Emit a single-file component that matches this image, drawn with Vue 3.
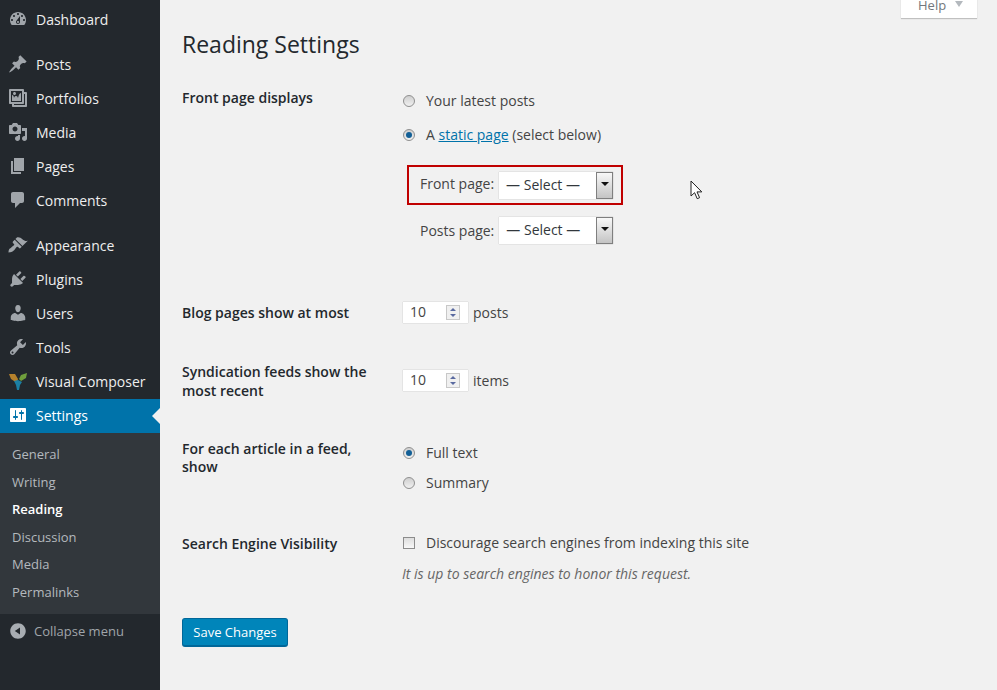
<script setup>
const icons = {
  dashboard: 'M3.76 16h12.48c1.1-1.37 1.76-3.11 1.76-5 0-4.42-3.58-8-8-8s-8 3.58-8 8c0 1.89.66 3.63 1.76 5zM10 4c.55 0 1 .45 1 1s-.45 1-1 1-1-.45-1-1 .45-1 1-1zM6 6c.55 0 1 .45 1 1s-.45 1-1 1-1-.45-1-1 .45-1 1-1zm8 0c.55 0 1 .45 1 1s-.45 1-1 1-1-.45-1-1 .45-1 1-1zm-5.37 5.55L12 7v6c0 1.1-.9 2-2 2s-2-.9-2-2c0-.57.24-1.08.63-1.45zM4 10c.55 0 1 .45 1 1s-.45 1-1 1-1-.45-1-1 .45-1 1-1zm12 0c.55 0 1 .45 1 1s-.45 1-1 1-1-.45-1-1 .45-1 1-1zm-5 3c0-.55-.45-1-1-1s-1 .45-1 1 .45 1 1 1 1-.45 1-1z',
  pin: 'M10.44 3.02l1.82-1.82 6.36 6.35-1.83 1.82c-1.05-.68-2.48-.57-3.41.36l-.75.75c-.92.93-1.04 2.35-.35 3.41l-1.83 1.82-2.41-2.41-2.8 2.79c-.42.42-3.38 2.71-3.8 2.29s1.86-3.39 2.28-3.81l2.79-2.79L4.1 9.36l1.83-1.82c1.05.69 2.48.57 3.4-.36l.75-.75c.93-.92 1.05-2.35.36-3.41z',
  gallery: 'M16 4h1.96c.57 0 1.04.47 1.04 1.04v12.92c0 .57-.47 1.04-1.04 1.04H5.04C4.47 19 4 18.53 4 17.96V16H2.04C1.47 16 1 15.53 1 14.96V2.04C1 1.47 1.47 1 2.04 1h12.92c.57 0 1.04.47 1.04 1.04V4zM3 14h11V3H3v11zm5-8.5C8 4.67 7.33 4 6.5 4S5 4.67 5 5.5 5.67 7 6.5 7 8 6.33 8 5.5zm2 4.5s1-5 3-5v8H4V7c2 0 2 3 2 3s.33-2 2-2 2 2 2 2zm7 7V6h-1v8.96c0 .57-.47 1.04-1.04 1.04H6v1h11z',
  media: 'M13 11V4c0-.55-.45-1-1-1h-1.67L9 1H5L3.67 3H2c-.55 0-1 .45-1 1v7c0 .55.45 1 1 1h10c.55 0 1-.45 1-1zM7 4.5c1.38 0 2.5 1.12 2.5 2.5S8.38 9.5 7 9.5 4.5 8.38 4.5 7 5.62 4.5 7 4.5zM14 6h5v10.5c0 1.38-1.12 2.5-2.5 2.5S14 17.88 14 16.5s1.12-2.5 2.5-2.5c.17 0 .34.02.5.05V9h-3V6zm-4 8.05V13h2v3.5c0 1.38-1.12 2.5-2.5 2.5S7 17.88 7 16.5 8.12 14 9.5 14c.17 0 .34.02.5.05z',
  page: 'M6 15V2h10v13H6zm-1 1h8v2H3V5h2v11z',
  comment: 'M5 2h9c1.1 0 2 .9 2 2v7c0 1.1-.9 2-2 2h-2l-5 5v-5H5c-1.1 0-2-.9-2-2V4c0-1.1.9-2 2-2z',
  appearance: 'M14.48 11.06L7.41 3.99l1.5-1.5c.5-.56 2.3-.47 3.51.32 1.21.8 1.43 1.28 2.91 2.1 1.18.64 2.45 1.26 4.45.85zm-.71.71L6.7 4.7 4.93 6.47c-.39.39-.39 1.02 0 1.41l1.06 1.06c.39.39.39 1.03 0 1.42-.6.6-1.43 1.11-2.21 1.69-.35.26-.7.53-1.01.84C1.43 13.23.91 14.57.7 15.6c-.09.38-.14.75-.16 1.1l-.04.29c-.06.33.19.6.52.53.33-.04.8-.09 1.38-.19 1.03-.2 2.37-.72 3.71-2.06.31-.31.58-.66.84-1.01.58-.78 1.09-1.61 1.69-2.21.39-.39 1.03-.39 1.42 0l1.06 1.06c.39.39 1.02.39 1.41 0z',
  plugin: 'M13.11 4.36L9.87 7.6 8 5.73l3.24-3.24c.35-.34 1.05-.2 1.56.32.52.51.66 1.21.31 1.55zm-8 1.77l.91-1.12 9.01 9.01-1.19.84c-.71.71-2.63 1.16-3.82 1.16H6.14L4.9 17.26c-.59.59-1.54.59-2.12 0-.59-.58-.59-1.53 0-2.12l1.24-1.24v-3.88c0-1.13.4-3.19 1.09-3.89zm7.26 3.97l3.24-3.24c.34-.35 1.04-.21 1.55.31.52.51.66 1.21.31 1.55l-3.24 3.25z',
  users: 'M10 9.25c-2.27 0-2.73-3.44-2.73-3.44C7 4.02 7.82 2 9.97 2c2.16 0 2.98 2.02 2.71 3.81 0 0-.41 3.44-2.68 3.44zm0 2.57L12.72 10c2.39 0 4.52 2.33 4.52 4.53v2.49s-3.65 1.13-7.24 1.13c-3.65 0-7.24-1.13-7.24-1.13v-2.49c0-2.25 1.94-4.48 4.47-4.48z',
  tools: 'M16.68 9.77c-1.34 1.34-3.3 1.67-4.95.99l-5.41 6.52c-.99.99-2.59.99-3.58 0s-.99-2.59 0-3.57l6.52-5.42c-.68-1.65-.35-3.61.99-4.95 1.28-1.28 3.12-1.62 4.72-1.06l-2.89 2.89 2.82 2.82 2.86-2.87c.53 1.58.18 3.39-1.08 4.65zM3.81 16.21c.4.39 1.04.39 1.43 0 .4-.4.4-1.04 0-1.43-.39-.4-1.03-.4-1.43 0-.39.39-.39 1.03 0 1.43z',
  settings: 'M18 16V4c0-.55-.45-1-1-1H3c-.55 0-1 .45-1 1v12c0 .55.45 1 1 1h14c.55 0 1-.45 1-1zM8 11h1c.55 0 1 .45 1 1s-.45 1-1 1H8v1.5c0 .28-.22.5-.5.5s-.5-.22-.5-.5V13H6c-.55 0-1-.45-1-1s.45-1 1-1h1V5.5c0-.28.22-.5.5-.5s.5.22.5.5V11zm5-2h-1c-.55 0-1-.45-1-1s.45-1 1-1h1V5.5c0-.28.22-.5.5-.5s.5.22.5.5V7h1c.55 0 1 .45 1 1s-.45 1-1 1h-1v5.5c0 .28-.22.5-.5.5s-.5-.22-.5-.5V9z',
  collapse: 'M10 .3c5.35 0 9.7 4.35 9.7 9.7 0 5.35-4.35 9.7-9.7 9.7-5.35 0-9.7-4.35-9.7-9.7C.3 4.65 4.65.3 10 .3zm2.5 14.2V5.5L6 10z',
}
const groups = [
  [{ label: 'Dashboard', icon: 'dashboard' }],
  [
    { label: 'Posts', icon: 'pin' },
    { label: 'Portfolios', icon: 'gallery' },
    { label: 'Media', icon: 'media' },
    { label: 'Pages', icon: 'page' },
    { label: 'Comments', icon: 'comment' },
  ],
  [
    { label: 'Appearance', icon: 'appearance' },
    { label: 'Plugins', icon: 'plugin' },
    { label: 'Users', icon: 'users' },
    { label: 'Tools', icon: 'tools' },
    { label: 'Visual Composer', icon: 'vc' },
    { label: 'Settings', icon: 'settings', current: true },
  ],
]
const subItems = ['General', 'Writing', 'Reading', 'Discussion', 'Media', 'Permalinks']
</script>

<template>
  <div class="admin">
    <aside class="side">
      <ul v-for="(group, g) in groups" :key="g" class="group">
        <li v-for="item in group" :key="item.label" class="item" :class="{ current: item.current }">
          <svg v-if="item.icon === 'vc'" class="icon" viewBox="0 0 20 20">
            <path fill="#b5812c" d="M1 3h6l3 5-1 3-3-1-3-2z" />
            <path fill="#6f9e3c" d="M19 2l-1 5-5 3-2-2 2-4z" />
            <path fill="#1b7fa3" d="M6 10l4-1 4 2-2 3-1 5H9l-1-5z" />
          </svg>
          <svg v-else class="icon" viewBox="0 0 20 20"><path fill-rule="evenodd" :d="icons[item.icon]" /></svg>
          <span>{{ item.label }}</span>
        </li>
      </ul>
      <ul class="sub">
        <li v-for="s in subItems" :key="s" :class="{ on: s === 'Reading' }">{{ s }}</li>
      </ul>
      <div class="collapse">
        <svg class="collapse-icon" viewBox="0 0 20 20"><path fill-rule="evenodd" :d="icons.collapse" /></svg>
        <span>Collapse menu</span>
      </div>
    </aside>

    <main class="main">
      <div class="help">Help <i class="help-arrow"></i></div>
      <h1>Reading Settings</h1>

      <section class="row row-front">
        <div class="th">Front page displays</div>
        <div class="td td-shift">
          <label class="opt"><i class="radio"></i>Your latest posts</label>
          <label class="opt opt-b"><i class="radio checked"></i><span>A <a>static page</a> (select below)</span></label>
          <div class="pick red">
            <span class="pick-label">Front page:</span>
            <span class="select">— Select —<b class="sel-btn"><i></i></b></span>
          </div>
          <div class="pick">
            <span>Posts page:</span>
            <span class="select">— Select —<b class="sel-btn"><i></i></b></span>
          </div>
        </div>
      </section>

      <section class="row row-blog">
        <div class="th">Blog pages show at most</div>
        <div class="td num-line num-blog">
          <span class="num">10<b class="spin"><i class="up"></i><i class="down"></i></b></span>posts
        </div>
      </section>

      <section class="row row-feed">
        <div class="th">Syndication feeds show the most recent</div>
        <div class="td num-line num-feed">
          <span class="num">10<b class="spin"><i class="up"></i><i class="down"></i></b></span>items
        </div>
      </section>

      <section class="row row-article">
        <div class="th">For each article in a feed, show</div>
        <div class="td td-shift">
          <label class="opt"><i class="radio checked"></i>Full text</label>
          <label class="opt opt-c"><i class="radio"></i>Summary</label>
        </div>
      </section>

      <section class="row row-search">
        <div class="th">Search Engine Visibility</div>
        <div class="td">
          <label class="opt"><i class="check"></i>Discourage search engines from indexing this site</label>
          <p class="desc">It is up to search engines to honor this request.</p>
        </div>
      </section>

      <button class="save">Save Changes</button>

      <svg class="cursor" width="13" height="20" viewBox="0 0 13 20">
        <path d="M1 1v15l3.6-3.3 2.6 6 2.4-1-2.6-5.800h4.800z" fill="#fff" stroke="#222" stroke-width="1" />
      </svg>
    </main>
  </div>
</template>

<style>
html, body { margin: 0; background: #f1f1f1; }
</style>

<style scoped>
.admin { display: flex; width: 997px; height: 690px; overflow: hidden; font-family: "Open Sans", "Noto Sans", sans-serif; font-size: 14px; color: #444; }
.side { width: 160px; flex: none; background: #23282d; padding-top: 3px; box-sizing: border-box; color: #eee; }
ul { list-style: none; margin: 0; padding: 0; }
.group { margin-bottom: 11px; }
.group:nth-of-type(3) { margin-bottom: 0; }
.item { height: 34px; box-sizing: border-box; padding-bottom: 2px; display: flex; align-items: center; padding-left: 8px; gap: 8px; position: relative; }
.icon { width: 20px; height: 20px; fill: #a0a5aa; flex: none; }
.current { background: #0073aa; color: #fff; }
.current .icon { fill: #fff; }
.current::after { content: ""; position: absolute; right: 0; top: 9px; border: 8px solid transparent; border-right-color: #f1f1f1; border-left: 0; }
.sub { background: #32373c; padding: 8px 0 7px; height: 181px; box-sizing: border-box; font-size: 13px; color: #b4b9be; }
.sub li { height: 27.6px; line-height: 27.6px; padding-left: 12px; }
.sub .on { color: #fff; font-weight: 600; }
.collapse { display: flex; align-items: center; gap: 8px; height: 34px; padding-left: 10px; color: #a0a5aa; font-size: 13px; }
.collapse-icon { width: 16px; height: 16px; fill: #a8adb2; flex: none; }
.main { flex: 1; position: relative; padding-left: 22px; box-sizing: border-box; background: #f1f1f1; }
.help { position: absolute; right: 20px; top: -10px; width: 76px; height: 28px; box-sizing: border-box; background: #fff; box-shadow: 0 1px 1px rgba(0,0,0,.2); font-size: 13px; color: #72777c; padding: 6px 0 0 17px; }
.help-arrow { display: inline-block; margin-left: 5px; border: 4.500px solid transparent; border-top: 6px solid #b4b9be; border-bottom: 0; vertical-align: 3px; }
h1 { margin: 0; padding-top: 29px; font-size: 23px; line-height: 31px; font-weight: 400; color: #23282d; }
.row { display: flex; }
.th { width: 221px; flex: none; box-sizing: border-box; padding-right: 20px; font-weight: 600; color: #23282d; line-height: 19px; }
.td { flex: 1; }
.td-shift { margin-top: 4px; }
.row-front { margin-top: 28px; height: 215px; }
.row-blog { height: 59px; align-items: flex-start; }
.row-feed { height: 78px; }
.row-article { height: 94px; }
.row-article .th { line-height: 18px; }
.row-search { height: 84px; }
.opt { display: flex; align-items: center; gap: 10px; height: 20px; line-height: 20px; margin-top: -1px; }
.opt-b { margin-top: 14px; }
.opt-c { margin-top: 10px; }
.radio, .check { width: 12px; height: 12px; flex: none; box-sizing: border-box; border: 1px solid #8f8f8f; background: linear-gradient(#cfcfcf, #f0f0f0); margin-right: 1px; }
.radio { border-radius: 50%; display: flex; align-items: center; justify-content: center; }
.checked::before { content: ""; width: 6px; height: 6px; border-radius: 50%; background: #125f96; }
.check { border-radius: 0; background: linear-gradient(#dedede, #f8f8f8); border-color: #8c8c8c; }
a { color: #0073aa; text-decoration: underline; }
.pick { display: flex; align-items: center; gap: 5px; box-sizing: border-box; width: 216px; height: 40px; margin-left: 4px; padding-left: 13px; margin-top: 5px; }
.pick.red { border: 2px solid #c00000; margin-top: 20px; padding-left: 11px; }
.pick-label { margin-bottom: 4px; }
.select { position: relative; width: 114px; height: 27px; box-sizing: border-box; background: #fff; box-shadow: 0 0 1px rgba(0,0,0,.3); padding-left: 7px; line-height: 26px; color: #32373c; }
.sel-btn { position: absolute; right: 0; top: 0; width: 17px; height: 27px; box-sizing: border-box; border: 1px solid #7f7f7f; background: linear-gradient(#f8f8f8, #c4c4c4); display: flex; align-items: center; justify-content: center; }
.sel-btn i { border: 4px solid transparent; border-top: 4px solid #111; border-bottom: 0; margin-bottom: 2px; }
.num-line { display: flex; align-items: center; gap: 5px; height: 21px; }
.num-blog { margin-top: -1px; }
.num-feed { margin-top: 8px; }
.num { position: relative; width: 65px; height: 21px; box-sizing: border-box; background: #fff; box-shadow: 0 0 1px rgba(0,0,0,.3); padding-left: 7px; line-height: 20px; }
.spin { position: absolute; left: 43px; top: 3px; width: 14px; height: 15px; box-sizing: border-box; border: 1px solid #c8c8c8; display: flex; flex-direction: column; align-items: center; justify-content: space-around; background: #f0f0f0; }
.up { border: 3px solid transparent; border-bottom: 3px solid #5a6aa0; border-top: 0; }
.down { border: 3px solid transparent; border-top: 3px solid #5a6aa0; border-bottom: 0; }
.desc { margin: 11px 0 0 -1px; font-style: italic; font-size: 14px; color: #666; line-height: 20px; }
.save { display: block; width: 106px; height: 29px; padding: 0 0 1px; box-sizing: border-box; background: #0085ba; border: 1px solid #006799; border-bottom-width: 2px; border-radius: 3px; color: #fff; font-family: inherit; font-size: 13px; }
.cursor { position: absolute; left: 530px; top: 180px; }
</style>
